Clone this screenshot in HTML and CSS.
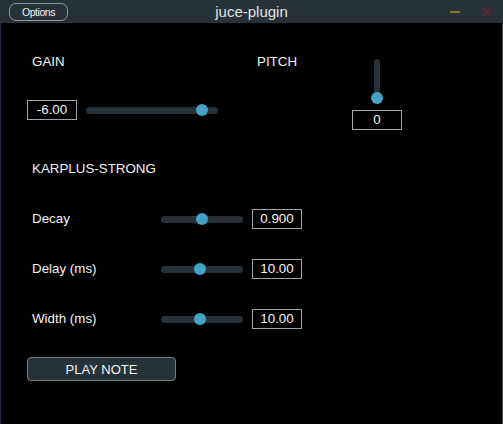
FILE: index.html
```html
<!DOCTYPE html>
<html>
<head>
<meta charset="utf-8">
<link rel="stylesheet" href="styles.css">
</head>
<body>
<div class="app">
  <header class="titlebar">
    <div class="tb-left"><button class="options">Options</button></div>
    <div class="title">juce-plugin</div>
    <div class="tb-right">
      <span class="min"></span>
      <svg class="close" width="11" height="11" viewBox="0 0 11 11"><path d="M1 1 L10 10 M10 1 L1 10" stroke="#6e2231" stroke-width="1.6" fill="none"/></svg>
    </div>
  </header>
  <main class="content">
    <section class="top">
      <div class="gain">
        <div class="label">GAIN</div>
        <div class="gain-row">
          <div class="valbox">-6.00</div>
          <div class="hslider gain-slider"><div class="track"></div><div class="thumb" style="left:110px"></div></div>
        </div>
      </div>
      <div class="label pitch-label">PITCH</div>
      <div class="pitch">
        <div class="vslider"><div class="vtrack"></div><div class="thumb vthumb"></div></div>
        <div class="valbox">0</div>
      </div>
    </section>
    <div class="label ks-label">KARPLUS-STRONG</div>
    <div class="params">
      <div class="param-row">
        <div class="label param-label">Decay</div>
        <div class="hslider ks-slider"><div class="track"></div><div class="thumb" style="left:35px"></div></div>
        <div class="valbox">0.900</div>
      </div>
      <div class="param-row">
        <div class="label param-label">Delay (ms)</div>
        <div class="hslider ks-slider"><div class="track"></div><div class="thumb" style="left:33px"></div></div>
        <div class="valbox">10.00</div>
      </div>
      <div class="param-row">
        <div class="label param-label">Width (ms)</div>
        <div class="hslider ks-slider"><div class="track"></div><div class="thumb" style="left:33px"></div></div>
        <div class="valbox">10.00</div>
      </div>
    </div>
    <button class="play">PLAY NOTE</button>
  </main>
</div>
</body>
</html>
```

FILE: styles.css
```css
* { box-sizing: border-box; }
html, body {
  margin: 0;
  padding: 0;
  background: #000;
  width: 503px;
  height: 424px;
  overflow: hidden;
  font-family: "Liberation Sans", Arial, sans-serif;
  color: #f2f2f2;
}
.app {
  width: 503px;
  height: 424px;
  display: flex;
  flex-direction: column;
}
.titlebar {
  height: 23px;
  flex: 0 0 23px;
  background: #263238;
  display: grid;
  grid-template-columns: 1fr auto 1fr;
  align-items: center;
}
.tb-left { display: flex; align-items: center; padding-left: 9px; }
.options {
  width: 59px;
  height: 18px;
  margin-top: 1px;
  border: 1px solid #8e989b;
  border-radius: 7px;
  background: #263238;
  color: #f0f0f0;
  font-family: "Liberation Sans", Arial, sans-serif;
  font-size: 10.5px;
  letter-spacing: -0.45px;
  padding: 0;
  line-height: 16px;
}
.title {
  font-size: 15px;
  line-height: 23px;
  color: #e2e2e2;
}
.tb-right {
  display: flex;
  justify-content: flex-end;
  align-items: center;
  padding-right: 11px;
  gap: 21px;
}
.min {
  display: block;
  width: 10px;
  height: 2px;
  background: #857630;
}
.close { display: block; margin-top: -1px; }

.content {
  flex: 1;
  border-left: 1px solid #2b2542;
  border-right: 1px solid #3d4549;
  padding-left: 26px;
  display: flex;
  flex-direction: column;
  align-items: flex-start;
}
.label {
  font-size: 13.35px;
  height: 20px;
  line-height: 20px;
  padding-left: 5px;
  white-space: nowrap;
}
.top {
  display: grid;
  grid-template-columns: 225px 100px 50px;
  align-items: start;
}
.gain { display: flex; flex-direction: column; padding-top: 29px; gap: 28px; }
.gain .label { align-self: flex-start; }
.pitch-label { margin-top: 29px; }
.gain-row { display: flex; align-items: center; gap: 9px; height: 20px; }
.valbox {
  width: 50px;
  height: 20px;
  border: 1px solid #9ea4a7;
  font-size: 13.35px;
  line-height: 18px;
  text-align: center;
  color: #f4f4f4;
  flex: 0 0 auto;
}
.hslider {
  position: relative;
  height: 20px;
  display: flex;
  align-items: center;
}
.gain-slider { width: 132px; }
.ks-slider { width: 82px; }
.track {
  width: 100%;
  height: 7px;
  border-radius: 4px;
  background: #263238;
}
.thumb {
  position: absolute;
  top: 4px;
  width: 12px;
  height: 12px;
  border-radius: 50%;
  background: #42a2c8;
}
.pitch {
  display: flex;
  flex-direction: column;
  align-items: center;
  padding-top: 36px;
  gap: 6px;
}
.vslider {
  position: relative;
  width: 12px;
  height: 45px;
  display: flex;
  justify-content: center;
}
.vtrack {
  width: 6px;
  height: 42px;
  border-radius: 3px;
  background: #263238;
}
.vthumb { left: 0; top: 33px; }

.ks-label { margin-top: 29px; }
.params {
  display: flex;
  flex-direction: column;
  gap: 30px;
  margin-top: 30px;
}
.param-row { display: flex; align-items: center; height: 20px; }
.param-label { width: 134px; }
.param-row .valbox { margin-left: 9px; }
.play {
  margin-top: 28px;
  width: 149px;
  height: 24px;
  background: #263238;
  border: 1px solid #737d82;
  border-radius: 4px;
  color: #f2f2f2;
  font-family: "Liberation Sans", Arial, sans-serif;
  font-size: 13px;
  padding: 0;
}
```
